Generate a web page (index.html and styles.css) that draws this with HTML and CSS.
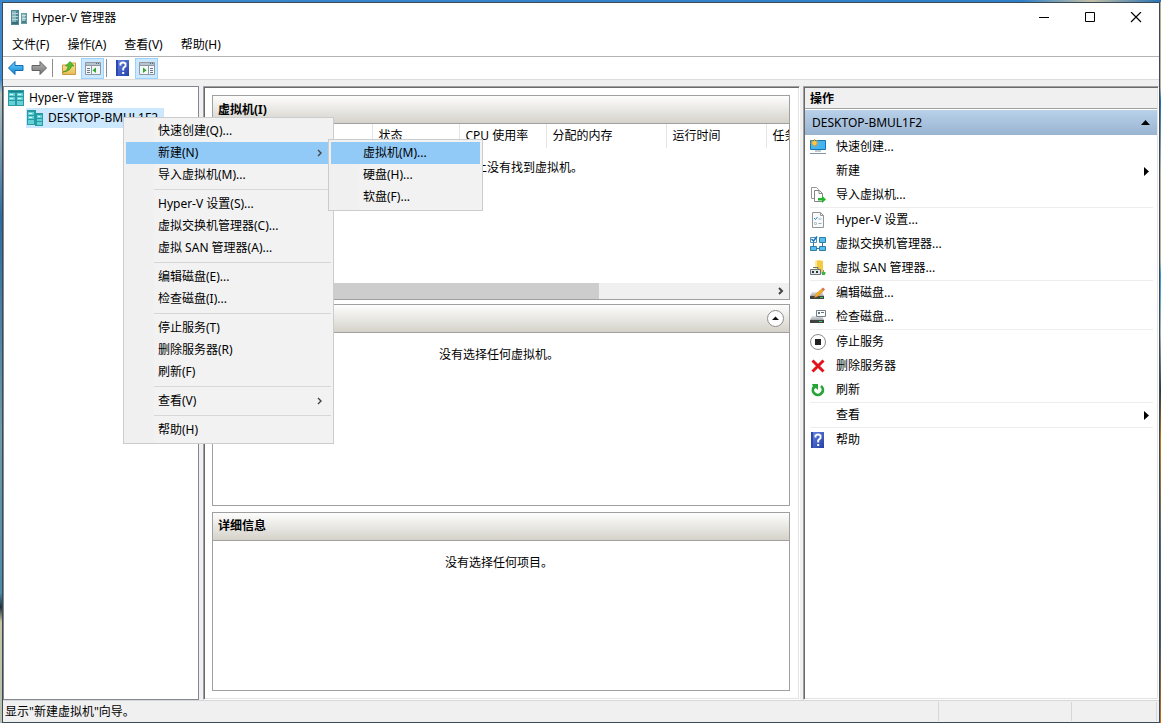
FILE: index.html
```html
<!DOCTYPE html>
<html lang="zh-CN">
<head>
<meta charset="utf-8">
<title>Hyper-V 管理器</title>
<link rel="stylesheet" href="styles.css">
</head>
<body>
<svg class="defs" aria-hidden="true">
  <defs>
    <linearGradient id="gBlue" x1="0" y1="0" x2="0" y2="1"><stop offset="0" stop-color="#6fd0f8"/><stop offset="1" stop-color="#0a84d8"/></linearGradient>
    <linearGradient id="gGray" x1="0" y1="0" x2="0" y2="1"><stop offset="0" stop-color="#b5b5b5"/><stop offset="1" stop-color="#747474"/></linearGradient>
    <linearGradient id="gHelp" x1="0" y1="0" x2="1" y2="1"><stop offset="0" stop-color="#6686e0"/><stop offset="1" stop-color="#2340a8"/></linearGradient>
    <linearGradient id="gFolder" x1="0" y1="0" x2="0" y2="1"><stop offset="0" stop-color="#fbe6a4"/><stop offset="1" stop-color="#e8bb54"/></linearGradient>
    <linearGradient id="gDisk" x1="0" y1="0" x2="0" y2="1"><stop offset="0" stop-color="#e4e6e8"/><stop offset="1" stop-color="#a2a7aa"/></linearGradient>
    <symbol id="help" viewBox="0 0 16 16"><path d="M1 0h13v16H1z" fill="url(#gHelp)"/><path d="M1 0h2v16H1z" fill="#2b48b0"/><path d="M5.500 5.500V3.500Q8 1.500 10.500 3.500V6L8.200 8.300V10.500" fill="none" stroke="#fff" stroke-width="1.900"/><path d="M7.200 12h2v2h-2z" fill="#fff"/></symbol>
    <symbol id="pane" viewBox="0 0 16 13"><path d="M.5.5h15v12H.5z" fill="#f4f6f8" stroke="#8b98a5"/><path d="M1 1h14v2H1z" fill="#b9c3cc"/><path d="M11 1.500h1M13 1.500h1" stroke="#566573"/><path d="M1 3.500h14" stroke="#8b98a5"/></symbol>
  </defs>
</svg>
<div class="window">
  <header class="titlebar">
    <svg class="app-icon" width="18" height="18" viewBox="0 0 18 18"><path d="M1 1h8v15H1z" fill="#4f8a97"/><path d="M2 2h4v13H2z" fill="#86b5bd"/><path d="M2 4.500h6M2 7.500h6M2 10.500h6" stroke="#b9d6da"/><path d="M2 13h6v2H2z" fill="#376d7a"/><path d="M11 4h6v11h-6z" fill="#669ca6"/><path d="M12 5h3v9h-3z" fill="#9cc4cb"/><path d="M12 6.500h4M12 9.500h4" stroke="#c5dde0"/><path d="M12 12h4v2h-4z" fill="#487d89"/></svg>
    <h1 class="title">Hyper-V 管理器</h1>
    <div class="controls">
      <button class="control" aria-label="最小化"><svg width="12" height="12"><path d="M1 5.500h10" stroke="#000"/></svg></button>
      <button class="control" aria-label="最大化"><svg width="12" height="12"><path d="M1.500.5h9v9h-9z" fill="none" stroke="#000"/></svg></button>
      <button class="control" aria-label="关闭"><svg width="12" height="12"><path d="M1 0l10 10M11 0L1 10" stroke="#000" stroke-width="1.200"/></svg></button>
    </div>
  </header>
  <nav class="menubar" aria-label="菜单栏">
    <button>文件(F)</button><button>操作(A)</button><button>查看(V)</button><button>帮助(H)</button>
  </nav>
  <div class="toolbar">
    <button class="tool" aria-label="后退"><svg width="18" height="16" viewBox="0 0 18 16"><path d="M1.500 8L8 1.500v4h8v5H8v4z" fill="url(#gBlue)" stroke="#136bb0"/></svg></button>
    <button class="tool" aria-label="前进"><svg width="18" height="16" viewBox="0 0 18 16"><path d="M16.500 8L10 1.500v4H2v5h8v4z" fill="url(#gGray)" stroke="#626262"/></svg></button>
    <span class="divider"></span>
    <button class="tool tool-up" aria-label="上移一级"><svg width="16" height="16" viewBox="0 0 16 16"><path d="M1.500 5h6l1-2h6v11.500h-13z" fill="url(#gFolder)" stroke="#c79a3c"/><path d="M2 12q5-1 5-6H4.500L9 1.500 13 6h-2.500Q10 11 2 12z" fill="#55bd2d" stroke="#2c8c1a" stroke-width=".6"/></svg></button>
    <button class="tool tool-on" aria-label="显示/隐藏控制台树"><svg width="16" height="16" viewBox="0 0 16 16"><use href="#pane" y="2" width="16" height="13"/><path d="M6.500 6v9" stroke="#8b98a5"/><path d="M2 8.500h3M2 10.500h3M2 12.500h3" stroke="#6a7b8c"/><path d="M11 7.500v5.500L7.500 10.200z" fill="#2daa2d"/></svg></button>
    <span class="divider"></span>
    <button class="tool tool-help" aria-label="帮助"><svg width="16" height="16"><use href="#help"/></svg></button>
    <button class="tool tool-on" aria-label="显示/隐藏操作窗格"><svg width="16" height="16" viewBox="0 0 16 16"><use href="#pane" y="2" width="16" height="13"/><path d="M9.500 6v9" stroke="#8b98a5"/><path d="M11 8.500h3M11 10.500h3M11 12.500h3" stroke="#6a7b8c"/><path d="M4 7.500v5.500l3.500-2.800z" fill="#2daa2d"/></svg></button>
  </div>

  <main class="workspace">
    <aside class="tree" aria-label="控制台树">
      <button class="node"><svg width="16" height="16" viewBox="0 0 16 16"><path d="M0 0h16v16H0z" fill="#2a9aa2"/><path d="M1 3h6v3H1zM9 3h6v3H9zM1 7h6v3H1zM9 7h6v3H9zM1 11h6v4H1zM9 11h6v4H9z" fill="#62d2d8"/><path d="M1 1.500h14" stroke="#1a7d86"/><path d="M2 4.500h3M10 4.500h3M2 8.500h3M10 8.500h3" stroke="#d8fafa"/></svg><span>Hyper-V 管理器</span></button>
      <button class="node node-child"><svg width="16" height="16" viewBox="0 0 16 16"><path d="M0 0h9v15H0zM8 3h8v13H8z" fill="#2a9aa2"/><path d="M1 2h6v3H1zM1 6h6v3H1zM1 10h6v4H1zM10 5h5v3h-5zM10 9h5v2h-5zM10 12h5v3h-5z" fill="#62d2d8"/><path d="M2 3.500h3M2 7.500h3M11 6.500h2" stroke="#d8fafa"/></svg><span>DESKTOP-BMUL1F2</span></button>
    </aside>

    <section class="center">
      <section class="panel panel-vms">
        <h2 class="panel-head">虚拟机(I)</h2>
        <div class="table-area">
          <table class="vm-table">
            <thead><tr><th class="c-name">名称</th><th class="c-state">状态</th><th class="c-state">CPU 使用率</th><th class="c-mem">分配的内存</th><th class="c-time">运行时间</th><th class="c-task">任务</th></tr></thead>
          </table>
          <p class="empty">在此服务器上没有找到虚拟机。</p>
        </div>
        <div class="scrollbar">
          <button aria-label="向左滚动"><svg width="8" height="8"><path d="M6 1L3 4l3 3" class="chev"/></svg></button>
          <div class="track"><div class="thumb"></div></div>
          <button aria-label="向右滚动"><svg width="8" height="8"><path d="M2 1l3 3-3 3" class="chev chev-bold"/></svg></button>
        </div>
      </section>
      <section class="panel panel-checkpoints">
        <h2 class="panel-head">检查点(C)<button class="collapse" aria-label="折叠"><svg width="17" height="17"><circle cx="8.500" cy="8.500" r="8" fill="#fff" stroke="#8c8c8c"/><path d="M5 10h7L8.500 6.500z" fill="#111"/></svg></button></h2>
        <p class="empty">没有选择任何虚拟机。</p>
      </section>
      <section class="panel panel-details">
        <h2 class="panel-head">详细信息</h2>
        <p class="empty">没有选择任何项目。</p>
      </section>
    </section>

    <aside class="actions">
      <h2 class="actions-head">操作</h2>
      <button class="actions-group"><span>DESKTOP-BMUL1F2</span><svg width="9" height="5"><path d="M0 5h9L4.500 0z"/></svg></button>
      <ul>
        <li><button><svg width="16" height="16" viewBox="0 0 16 16"><path d="M.5 1.500h15v9H.5z" fill="#42b4f3" stroke="#1976a8"/><path d="M5 12h6M0 14.500h16" stroke="#8196a8" stroke-width="1.200"/><path d="M4.500 0v8M.5 4h8M1.500 1l6 6M7.500 1l-6 6" stroke="#f59a14"/><circle cx="4.500" cy="4" r="2.200" fill="#ffc83a"/></svg><span>快速创建...</span></button></li>
        <li><button class="no-icon"><span>新建</span><svg class="more" width="5" height="9"><path d="M0 0v9l5-4.500z"/></svg></button></li>
        <li><button><svg width="16" height="16" viewBox="0 0 16 16"><path d="M1.500.5h5l2 2v9h-7z" fill="#fff" stroke="#959595"/><path d="M4.500 3.500h5l3 3v8h-8z" fill="#fff" stroke="#858585"/><path d="M9 3.500v3h3" fill="none" stroke="#858585"/><path d="M8 11h4V8.500L16 12.500l-4 3.500v-2.500H8z" fill="#25b52c"/></svg><span>导入虚拟机...</span></button></li>
        <li class="rule"><button><svg width="16" height="16" viewBox="0 0 16 16"><path d="M2.500.5h8l3 3v12h-11z" fill="#f8fbfd" stroke="#959595"/><path d="M10.500.5v3h3" fill="none" stroke="#959595"/><path d="M4 6l1.500 1.500L7.500 5" fill="none" stroke="#2588cf"/><path d="M8.500 7h3M8.500 11.500h3" stroke="#9aa"/><path d="M4.500 10.500h2v2h-2z" fill="none" stroke="#b8c4cc"/></svg><span>Hyper-V 设置...</span></button></li>
        <li><button><svg width="16" height="16" viewBox="0 0 16 16"><path d="M3.500 4v8M12.500 4v8M5 12.500h6" fill="none" stroke="#4a7088"/><path d="M.5 1.500h6v5h-6z" fill="#fff" stroke="#4e90b8"/><path d="M1.500 3l2 2L7 .5" fill="none" stroke="#1673c2" stroke-width="1.500"/><path d="M9.500 1.500h6v5h-6zM.5 10.500h6v4h-6zM9.500 10.500h6v4h-6z" fill="#5bbcf0" stroke="#287ea9"/></svg><span>虚拟交换机管理器...</span></button></li>
        <li><button><svg width="16" height="16" viewBox="0 0 16 16"><path d="M5 1q4-1.500 8 0v11H5z" fill="#f4ca3f"/><path d="M5 1h2v10H5z" fill="#ffe997"/><path d="M.5 9.500h10v5H.5z" fill="#e4e7e9" stroke="#68747c"/><path d="M2 11h2v2H2zM6 11h2v2H6z" fill="#333"/><path d="M3 7.500h5v2" fill="none" stroke="#68747c"/><path d="M11 13h5M13.500 10v4" stroke="#849098"/><path d="M12 12h3v3h-3z" fill="#38b83e"/></svg><span>虚拟 SAN 管理器...</span></button></li>
        <li class="rule"><button><svg width="16" height="16" viewBox="0 0 16 16"><path d="M2 7h10l2 4H0z" fill="url(#gDisk)"/><path d="M0 11h14v3H0z" fill="#3f4346"/><path d="M10 12.500h3" stroke="#31d441"/><path d="M4.500 12.500l1-3 6-5.500 2 2-6 5.500z" fill="#f7ad24" stroke="#c87c17" stroke-width=".5"/><path d="M11.500 4l1.500-1.500 2 2L13.500 6z" fill="#dd6a54"/></svg><span>编辑磁盘...</span></button></li>
        <li><button><svg width="16" height="16" viewBox="0 0 16 16"><path d="M2 7h10l2 4H0z" fill="url(#gDisk)"/><path d="M0 11h14v3H0z" fill="#3f4346"/><path d="M9 12.500h3" stroke="#31d441"/><path d="M6.500 1.500h9v6h-9z" fill="#fff" stroke="#737f88"/><path d="M8 3h2v2H8zM11 3h3v1h-3z" fill="#68747c"/></svg><span>检查磁盘...</span></button></li>
        <li class="rule"><button><svg width="16" height="16" viewBox="0 0 16 16"><circle cx="8" cy="8" r="7.500" fill="#fff" stroke="#8c8c8c"/><path d="M5 5h6v6H5z" fill="#222"/></svg><span>停止服务</span></button></li>
        <li><button><svg width="16" height="16" viewBox="0 0 16 16"><path d="M2.500 2.500l11 11M13.500 2.500l-11 11" stroke="#e1141e" stroke-width="3"/></svg><span>删除服务器</span></button></li>
        <li><button><svg width="16" height="16" viewBox="0 0 16 16"><path d="M3.800 5A5 5 0 1 0 11 4" fill="none" stroke="#28a538" stroke-width="2.800"/><path d="M2 2h6v6L5.800 6 4 7z" fill="#28a538"/></svg><span>刷新</span></button></li>
        <li class="rule"><button class="no-icon"><span>查看</span><svg class="more" width="5" height="9"><path d="M0 0v9l5-4.500z"/></svg></button></li>
        <li class="rule"><button><svg width="16" height="16"><use href="#help"/></svg><span>帮助</span></button></li>
      </ul>
    </aside>
  </main>

  <footer class="status"><span class="status-text">显示"新建虚拟机"向导。</span><span class="cell cell-wide"></span><span class="cell"></span></footer>

  <ul class="menu context" role="menu">
    <li><button role="menuitem">快速创建(Q)...</button></li>
    <li class="has-sub"><button role="menuitem" class="current">新建(N)<svg width="8" height="8"><path d="M2 1l3 3-3 3" class="chev"/></svg></button>
      <ul class="menu submenu" role="menu">
        <li><button role="menuitem" class="current">虚拟机(M)...</button></li>
        <li><button role="menuitem">硬盘(H)...</button></li>
        <li><button role="menuitem">软盘(F)...</button></li>
      </ul>
    </li>
    <li><button role="menuitem">导入虚拟机(M)...</button></li>
    <li class="sep"></li>
    <li><button role="menuitem">Hyper-V 设置(S)...</button></li>
    <li><button role="menuitem">虚拟交换机管理器(C)...</button></li>
    <li><button role="menuitem">虚拟 SAN 管理器(A)...</button></li>
    <li class="sep"></li>
    <li><button role="menuitem">编辑磁盘(E)...</button></li>
    <li><button role="menuitem">检查磁盘(I)...</button></li>
    <li class="sep"></li>
    <li><button role="menuitem">停止服务(T)</button></li>
    <li><button role="menuitem">删除服务器(R)</button></li>
    <li><button role="menuitem">刷新(F)</button></li>
    <li class="sep"></li>
    <li><button role="menuitem">查看(V)<svg width="8" height="8"><path d="M2 1l3 3-3 3" class="chev"/></svg></button></li>
    <li class="sep"></li>
    <li><button role="menuitem">帮助(H)</button></li>
  </ul>
</div>
</body>
</html>
```

FILE: styles.css
```css
* { box-sizing: border-box; }

body {
  margin: 0;
  height: 100vh;
  padding: 2px 1px 0 2px;
  font: 12px/16px "Noto Sans", "Noto Sans CJK SC", sans-serif;
  color: #000;
  overflow: hidden;
  background:
    linear-gradient(90deg, #3a87cc 0%, #2f7fc8 88%, #c4bfa4 94%, #2672b5 100%) top / 100% 2px no-repeat,
    linear-gradient(180deg, #3c88cc 0%, #3c88cc 11%, #b8c4bc 13%, #2d6ca0 30%, #6f9aa8 60%, #4d8ba8 82%, #1f3038 84%, #c9c4a4 86%, #b5c0b0 100%) left / 2px 100% no-repeat,
    linear-gradient(180deg, #b8ac90 0%, #b8b49c 12%, #1c6cb4 14%, #b8b49c 24%, #b8b49c 36%, #2a9ad8 38%, #a8b4b0 46%, #2c3c3c 54%, #c87810 61%, #4a6a78 75%, #3e5a70 88%, #d06a08 100%) right / 1px 100% no-repeat;
}

h1, h2, p, ul { margin: 0; padding: 0; font-size: inherit; }
h1 { font-weight: normal; }
ul { list-style: none; }
button {
  display: flex;
  align-items: center;
  margin: 0;
  padding: 0;
  border: 0;
  background: none;
  color: inherit;
  font: inherit;
  text-align: left;
  white-space: nowrap;
}
svg { display: block; flex: none; }
.defs { position: absolute; width: 0; height: 0; }
.chev { fill: none; stroke: #444; stroke-width: 1.4; }
.chev-bold { stroke-width: 2; }

.window {
  position: relative;
  display: flex;
  flex-direction: column;
  height: 100%;
  border: 1px solid #3b4a57;
  background: #f0f0f0;
}

.titlebar { display: flex; align-items: center; height: 30px; padding-left: 7px; background: #fff; }
.title { flex: 1; margin-left: 4px; }
.controls { display: flex; }
.control { width: 46px; height: 30px; justify-content: center; }

.menubar { display: flex; gap: 18px; height: 24px; padding: 0 9px; background: #fff; border-bottom: 1px solid #b4b4b4; }

.toolbar { display: flex; align-items: center; height: 23px; padding-left: 1px; background: #fff; border-bottom: 1px solid #dcdcdc; }
.tool { width: 23px; height: 21px; justify-content: center; }
.tool-on { background: #cce8ff; border: 1px solid #99d1ff; }
.tool-up { margin-right: 1px; }
.tool-help { margin-right: 1px; }
.divider { width: 1px; height: 18px; margin: 0 4px 0 2px; background: #8c8c8c; }

.workspace { flex: 1; min-height: 0; display: flex; padding-top: 6px; }
.tree { width: 196px; margin-right: 4px; border: 1px solid #828790; background: #fff; padding: 1px 0 0 4px; }
.node { height: 20px; gap: 5px; }
.node-child { margin-left: 18px; padding: 0 6px 0 1px; background: #cce8ff; }

.center, .actions {
  border: 1px solid;
  border-color: #a0a0a0 #fff #fff #a0a0a0;
  box-shadow: inset 1px 1px #696969, inset -1px -1px #e3e3e3;
  background: #fff;
}
.center { flex: 1; min-width: 0; margin-right: 3px; display: flex; flex-direction: column; gap: 4px; padding: 8px 9px 8px 8px; }
.panel { display: flex; flex-direction: column; min-height: 0; border: 1px solid #a0a0a0; }
.panel-vms { flex: 205 1 0; }
.panel-checkpoints { flex: 202 1 0; }
.panel-details { flex: 179 1 0; margin-top: 2px; }
.panel-head {
  display: flex;
  align-items: center;
  justify-content: space-between;
  flex: none;
  height: 28px;
  padding: 0 5px;
  background: linear-gradient(#fdfdfd, #d5d2ca);
  border-bottom: 1px solid #a0a0a0;
  font-weight: bold;
}
.empty { padding: 14px 4px 0 0; text-align: center; }
.table-area { flex: 1; min-height: 0; overflow: hidden; }
.table-area .empty { padding-top: 12px; }
.vm-table { width: 100%; table-layout: fixed; border-collapse: collapse; }
.vm-table th {
  height: 24px;
  padding: 0 0 0 6px;
  border-right: 1px solid #e5e5e5;
  font-weight: normal;
  text-align: left;
  white-space: nowrap;
  overflow: hidden;
}
.vm-table th:last-child { border-right: 0; }
.c-name { width: 159px; }
.c-state { width: 87px; }
.c-mem { width: 120px; }
.c-time { width: 100px; }

.scrollbar { display: flex; height: 16px; background: #f0f0f0; }
.scrollbar button { width: 17px; justify-content: center; }
.track { flex: 1; display: flex; }
.thumb { width: 68%; background: #cdcdcd; }

.actions { width: 356px; padding: 1px; }
.actions-head { height: 21px; padding: 3px 5px 1px; background: #f0f0f0; border-bottom: 1px solid #a0a0a0; }
.actions-group {
  justify-content: space-between;
  width: 100%;
  height: 25px;
  margin-top: 1px;
  padding: 0 7px;
  background: linear-gradient(#b9d1ea, #99b4d1);
}
.actions ul { padding: 0 4px 0 5px; }
.actions li button { width: 100%; height: 24px; gap: 10px; padding-right: 4px; }
.actions .no-icon { padding-left: 26px; }
.actions .more { margin-left: auto; }
.rule { border-top: 1px solid #ededed; }

.status { display: flex; align-items: center; height: 22px; padding: 1px 2px; border-top: 1px solid #d7d7d7; }
.status-text { flex: 1; }
.cell { width: 86px; height: 19px; border: solid #d7d7d7; border-width: 0 1px; }
.cell-wide { width: 133px; border-right: 0; }

.menu {
  position: absolute;
  padding: 2px;
  border: 1px solid #ccc;
  background: linear-gradient(90deg, #f0f0f0 30px, #f2f2f2 30px);
}
.context { left: 120px; top: 114px; width: 211px; }
.has-sub { position: relative; }
.submenu { left: 202px; top: -3px; width: 155px; }
.menu button { width: 100%; height: 22px; padding: 0 7px 0 32px; justify-content: space-between; }
.menu .current { background: #91c9f7; }
.sep { height: 7px; margin-left: 28px; padding: 3px 0; }
.sep::before { content: ""; display: block; height: 1px; background: #d7d7d7; }
```
